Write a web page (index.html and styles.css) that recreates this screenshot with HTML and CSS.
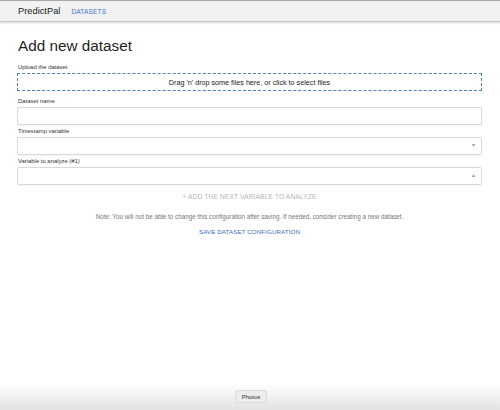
FILE: index.html
```html
<!DOCTYPE html>
<html>
<head>
<meta charset="utf-8">
<link rel="stylesheet" href="styles.css">
</head>
<body>
<div class="topline"></div>
<header class="appbar">
  <span class="brand">PredictPal</span>
  <span class="nav">DATASETS</span>
</header>
<main class="content">
  <h1 class="title">Add new dataset</h1>
  <div class="field first">
    <label class="label">Upload the dataset</label>
    <div class="dropzone">Drag 'n' drop some files here, or click to select files</div>
  </div>
  <div class="field second">
    <label class="label">Dataset name</label>
    <div class="input"></div>
  </div>
  <div class="field">
    <label class="label">Timestamp variable</label>
    <div class="input select"><span class="arrow">▾</span></div>
  </div>
  <div class="field">
    <label class="label">Variable to analyze (#1)</label>
    <div class="input select"><span class="arrow up">▴</span></div>
  </div>
  <div class="add">+ ADD THE NEXT VARIABLE TO ANALYZE</div>
  <div class="note">Note: You will not be able to change this configuration after saving. If needed, consider creating a new dataset.</div>
  <div class="save">SAVE DATASET CONFIGURATION</div>
</main>
<div class="dock">
  <span class="tip">Photos</span>
</div>
</body>
</html>
```
FILE: styles.css
```css
html, body {
  margin: 0;
  padding: 0;
  width: 500px;
  height: 410px;
  overflow: hidden;
  background: #fff;
  font-family: "Liberation Sans", Arial, sans-serif;
  color: #222;
  position: relative;
}
.topline {
  height: 1px;
  background: #a8a8a8;
}
.appbar {
  height: 20px;
  background: #f1f1f1;
  display: flex;
  align-items: center;
  padding-left: 18px;
  gap: 11px;
  border-bottom: 1px solid #c8c8c8;
  box-shadow: 0 1px 2px rgba(0,0,0,0.18);
}
.brand {
  font-size: 9.3px;
  color: #222;
}
.nav {
  font-size: 6.5px;
  color: #3f74c4;
  letter-spacing: 0.2px;
}
.content {
  padding: 0 18px 0 17px;
}
.title {
  font-size: 15.3px;
  font-weight: normal;
  margin: 14px 0 0 1px;
  line-height: 20px;
  color: #1f1f1f;
}
.field {
  display: flex;
  flex-direction: column;
}
.label {
  font-size: 5.9px;
  color: #333;
  line-height: 7px;
  margin: 3px 0 2px 1px;
}
.field.first .label {
  margin-top: 8px;
}
.field.second .label {
  margin-top: 7px;
}
.dropzone {
  height: 16px;
  border: 1px dashed #4f7fc0;
  display: flex;
  align-items: center;
  justify-content: center;
  font-size: 7.2px;
  color: #222;
}
.input {
  height: 16px;
  border: 1px solid #d9d9d9;
  border-radius: 2px;
  box-shadow: 0 1px 1px rgba(0,0,0,0.05);
  position: relative;
}
.select .arrow {
  position: absolute;
  right: 6px;
  top: 3px;
  font-size: 6px;
  color: #999;
}
.add {
  text-align: center;
  font-size: 6.7px;
  color: #b4b4b4;
  margin-top: 8px;
  letter-spacing: 0.1px;
}
.note {
  text-align: center;
  font-size: 6.3px;
  color: #777;
  margin-top: 13px;
}
.save {
  text-align: center;
  font-size: 6.2px;
  color: #3a6db8;
  margin-top: 8px;
  letter-spacing: 0.1px;
}
.dock {
  position: absolute;
  left: 0;
  right: 0;
  bottom: 0;
  height: 26px;
  background: linear-gradient(to bottom, rgba(240,240,240,0), #e2e2e2);
}
.tip {
  position: absolute;
  left: 235px;
  top: 6px;
  width: 32px;
  height: 13px;
  background: #ececec;
  border: 1px solid #dcdcdc;
  border-radius: 2px;
  font-size: 6px;
  color: #333;
  display: flex;
  align-items: center;
  justify-content: center;
  box-sizing: border-box;
}
```
